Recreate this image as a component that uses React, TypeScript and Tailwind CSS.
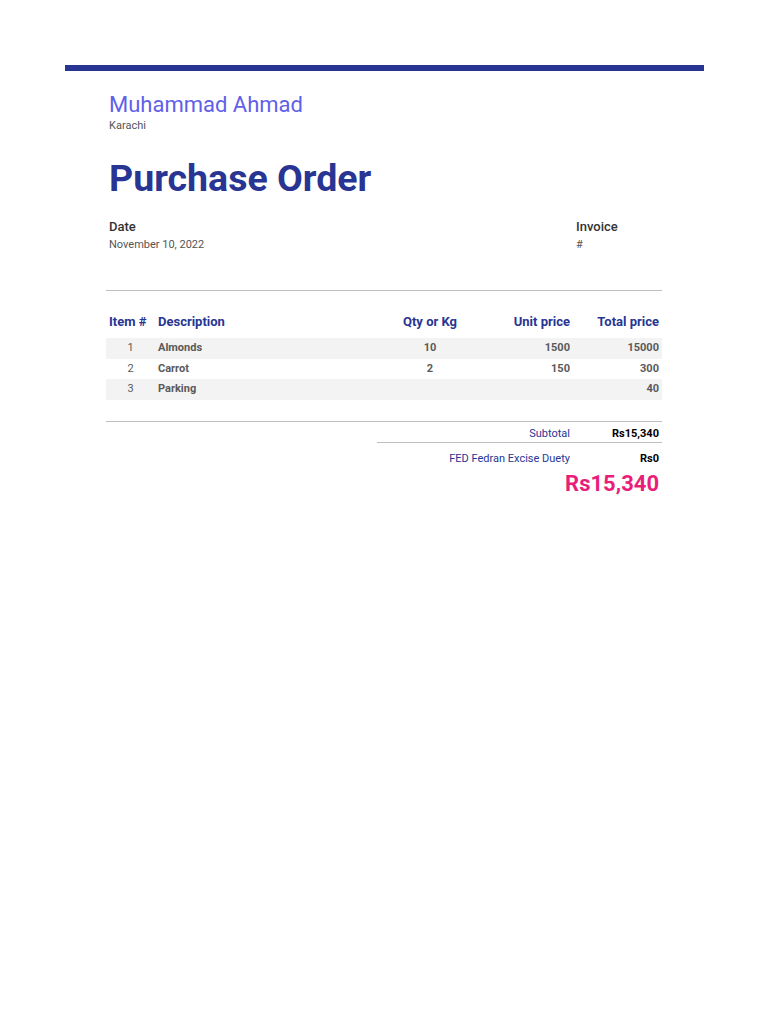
import React from 'react';

const rows = [
  { n: '1', desc: 'Almonds', qty: '10', unit: '1500', total: '15000' },
  { n: '2', desc: 'Carrot', qty: '2', unit: '150', total: '300' },
  { n: '3', desc: 'Parking', qty: '', unit: '', total: '40' },
];

const cols = 'grid grid-cols-[49px_235px_80px_103px_89px]';

export default function App() {
  return (
    <div className="min-h-[1024px] w-[768px] bg-white pt-[65px] px-[65px] font-['Roboto',sans-serif]">
      {/* top accent bar */}
      <div className="h-[6px] w-[639px] bg-[#283593]" />

      <div className="ml-[41px] w-[556px]">
        <div className="px-[3px] pt-[21px]">
          <div className="text-[22px] leading-[26px] text-[#6060e8]">Muhammad Ahmad</div>
          <div className="mt-[1px] text-[11px] leading-[14px] text-[#555]">Karachi</div>
          <h1 className="mt-[23px] text-[37.5px] font-bold leading-[44px] text-[#283593]">Purchase Order</h1>

          <div className="mt-[18px] flex">
            <div className="w-[467px]">
              <div className="text-[13px] font-medium leading-[18px] text-[#333]">Date</div>
              <div className="mt-[1px] text-[11px] leading-[16px] text-[#555]">November 10, 2022</div>
            </div>
            <div>
              <div className="text-[13px] font-medium leading-[18px] text-[#333]">Invoice</div>
              <div className="mt-[1px] text-[11px] leading-[16px] text-[#555]">#</div>
            </div>
          </div>
        </div>

        <div className="mt-[37px] h-px bg-[#bdbdbd]" />

        {/* items table */}
        <div className={`${cols} mt-[22px] text-[13px] font-bold leading-[18px] text-[#283593]`}>
          <div className="pl-[3px]">Item #</div>
          <div className="pl-[3px]">Description</div>
          <div className="text-center">Qty or Kg</div>
          <div className="pr-[3px] text-right">Unit price</div>
          <div className="pr-[3px] text-right">Total price</div>
        </div>

        <div className="mt-[7px]">
          {rows.map((r, i) => (
            <div
              key={r.n}
              className={`${cols} h-[20.5px] items-center text-[11px] font-bold text-[#5a5a5a] ${i % 2 === 0 ? 'bg-[#f3f3f3]' : ''}`}
            >
              <div className="text-center font-normal">{r.n}</div>
              <div className="pl-[3px]">{r.desc}</div>
              <div className="text-center">{r.qty}</div>
              <div className="pr-[3px] text-right">{r.unit}</div>
              <div className="pr-[3px] text-right">{r.total}</div>
            </div>
          ))}
        </div>

        <div className="mt-[21px] h-px bg-[#bdbdbd]" />

        {/* totals */}
        <div className="ml-[271px] w-[285px] text-[11px]">
          <div className="grid grid-cols-[196px_89px] pt-[5px] pb-[1px] leading-[14px]">
            <div className="pr-[3px] text-right text-[#283593]">Subtotal</div>
            <div className="pr-[3px] text-right font-bold text-black">Rs15,340</div>
          </div>
          <div className="h-px bg-[#bdbdbd]" />
          <div className="grid grid-cols-[196px_89px] pt-[9px] leading-[14px]">
            <div className="pr-[3px] text-right text-[#283593]">FED Fedran Excise Duety</div>
            <div className="pr-[3px] text-right font-bold text-black">Rs0</div>
          </div>
          <div className="mt-[5px] pr-[3px] text-right text-[22px] font-bold leading-[26px] text-[#e91e7b]">Rs15,340</div>
        </div>
      </div>
    </div>
  );
}
